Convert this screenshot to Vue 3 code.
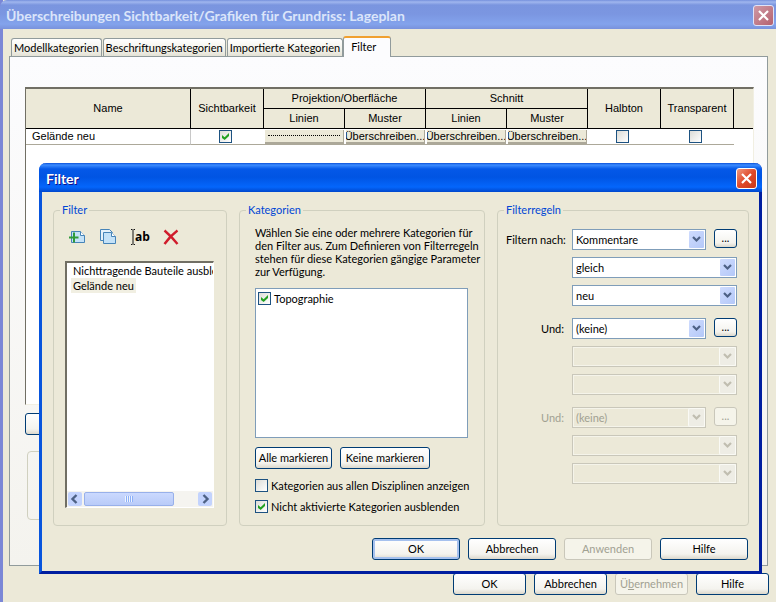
<script setup>
import { computed, reactive, ref } from 'vue'

// Registerkarten
const tabs = ['Modellkategorien', 'Beschriftungskategorien', 'Importierte Kategorien', 'Filter']
const activeTab = ref('Filter')

// Zeilen der Sichtbarkeitstabelle
const rows = reactive([
	{ id: 1, name: 'Gelände neu', visible: true, halftone: false, transparent: false }
])

// Filterliste im Dialog
const filters = ['Nichttragende Bauteile ausblenden', 'Gelände neu']
const selected = ref('Gelände neu')

// Kategorien
const categories = reactive([{ name: 'Topographie', checked: true }])
const allDisciplines = ref(false)
const hideUnchecked = ref(true)

const markAll = (value) => {
	categories.forEach((item) => {
		item.checked = value
	})
}

// Filterregeln
const rules = reactive([
	{ id: 'r1', label: 'Filtern nach:', param: 'Kommentare', operator: 'gleich', value: 'neu' },
	{ id: 'r2', label: 'Und:', param: '(keine)', operator: '', value: '' },
	{ id: 'r3', label: 'Und:', param: '(keine)', operator: '', value: '' }
])

const params = ['(keine)', 'Kommentare']
const operators = ['', 'gleich', 'ungleich']
const values = ['', 'neu']

// eine Regel ist erst aktiv, wenn die vorige einen Parameter hat
const ruleStates = computed(() =>
	rules.map((rule, i) => ({
		rule,
		off: i > 0 && rules[i - 1].param === '(keine)',
		empty: rule.param === '(keine)'
	}))
)
</script>

<template>
	<div class="window">
		<header class="titlebar">
			<h1>Überschreibungen Sichtbarkeit/Grafiken für Grundriss: Lageplan</h1>
			<button class="close" aria-label="Fenster schließen">
				<svg viewBox="0 0 19 19"><path d="M5 5l9 9M14 5l-9 9" /></svg>
			</button>
		</header>

		<main class="content">
			<nav class="tabs">
				<button
					v-for="tab in tabs"
					:key="tab"
					class="tab"
					:class="{ active: tab === activeTab }"
					@click="activeTab = tab">
					{{ tab }}
				</button>
			</nav>

			<section class="panel">
				<div class="grid-box">
					<table>
						<colgroup>
							<col class="c-name" />
							<col class="c-check" />
							<col class="c-over" span="4" />
							<col class="c-check" span="2" />
							<col />
						</colgroup>
						<thead>
							<tr>
								<th rowspan="2">Name</th>
								<th rowspan="2">Sichtbarkeit</th>
								<th colspan="2">Projektion/Oberfläche</th>
								<th colspan="2">Schnitt</th>
								<th rowspan="2">Halbton</th>
								<th rowspan="2">Transparent</th>
								<th rowspan="2" class="rest"></th>
							</tr>
							<tr>
								<th>Linien</th>
								<th>Muster</th>
								<th>Linien</th>
								<th>Muster</th>
							</tr>
						</thead>
						<tbody>
							<tr v-for="row in rows" :key="row.id">
								<td class="name">{{ row.name }}</td>
								<td class="tick"><input v-model="row.visible" type="checkbox" aria-label="Sichtbarkeit" /></td>
								<td>
									<button class="override" aria-label="Linien überschreiben"><i class="line"></i></button>
								</td>
								<td v-for="n in 3" :key="n">
									<button class="override"><span>Überschreiben...</span></button>
								</td>
								<td class="tick"><input v-model="row.halftone" type="checkbox" aria-label="Halbton" /></td>
								<td class="tick"><input v-model="row.transparent" type="checkbox" aria-label="Transparent" /></td>
								<td class="rest"></td>
							</tr>
						</tbody>
					</table>
				</div>
				<button class="btn" aria-label="Hinzufügen"></button>
				<div class="hint-box"></div>
			</section>

			<footer class="actions">
				<button class="btn">OK</button>
				<button class="btn">Abbrechen</button>
				<button class="btn" disabled>Ü<u>b</u>ernehmen</button>
				<button class="btn">Hilfe</button>
			</footer>
		</main>

		<!-- Filter-Dialog -->
		<div class="dialog" role="dialog" aria-labelledby="dialog-title">
			<header class="titlebar">
				<h2 id="dialog-title">Filter</h2>
				<button class="close" aria-label="Dialog schließen">
					<svg viewBox="0 0 19 19"><path d="M5 5l9 9M14 5l-9 9" /></svg>
				</button>
			</header>

			<div class="groups">
				<fieldset class="filters">
					<legend>Filter</legend>
					<div class="tools">
						<button aria-label="Neu">
							<svg viewBox="0 0 18 18">
								<path d="M2.500 3.500h9l4 4v7h-13z" fill="#c4e2f8" stroke="#4684b8" />
								<path d="M11.500 3.500v4h4" fill="#fff" stroke="#4684b8" />
								<path d="M5 4.500v10M0 9.500h9.500" stroke="#2f9a3a" stroke-width="2" fill="none" />
							</svg>
						</button>
						<button aria-label="Duplizieren">
							<svg viewBox="0 0 18 18">
								<path d="M0.500 1.500h9l3 3v8h-12z" fill="#e6f2fb" stroke="#4684b8" />
								<path d="M3.500 4.500h8l4 4v7h-12z" fill="#c4e2f8" stroke="#4684b8" />
								<path d="M11.500 4.500v4h4" fill="#fff" stroke="#4684b8" />
							</svg>
						</button>
						<button class="rename" aria-label="Umbenennen">
							<svg viewBox="0 0 4 18"><path d="M0 1.500h1.500M2.500 1.500h1.500M2 2v14M0 16.500h1.500M2.500 16.500h1.500" stroke="#111" fill="none" /></svg>
							<b>ab</b>
						</button>
						<button aria-label="Löschen">
							<svg viewBox="0 0 18 18">
								<path d="M2.500 2.500Q9 8 15.500 16M15.500 2.500Q8 8 2.500 16" stroke="#d01c2c" stroke-width="2.400" fill="none" />
							</svg>
						</button>
					</div>
					<div class="list">
						<ul>
							<li v-for="item in filters" :key="item" @click="selected = item">
								<span :class="{ selected: item === selected }">{{ item }}</span>
							</li>
						</ul>
						<div class="scrollbar">
							<button aria-label="Nach links"><svg viewBox="0 0 14 14"><path d="M8.500 3L4.500 7l4 4" /></svg></button>
							<div class="track"><div class="thumb"><i></i></div></div>
							<button aria-label="Nach rechts"><svg viewBox="0 0 14 14"><path d="M5.500 3l4 4-4 4" /></svg></button>
						</div>
					</div>
				</fieldset>

				<fieldset class="categories">
					<legend>Kategorien</legend>
					<p>
						Wählen Sie eine oder mehrere Kategorien für<br />
						den Filter aus. Zum Definieren von Filterregeln<br />
						stehen für diese Kategorien gängige Parameter<br />
						zur Verfügung.
					</p>
					<div class="check-list">
						<label v-for="item in categories" :key="item.name" class="check">
							<input v-model="item.checked" type="checkbox" />{{ item.name }}
						</label>
					</div>
					<div class="mark">
						<button class="btn" @click="markAll(true)">Alle markieren</button>
						<button class="btn wide" @click="markAll(false)">Keine markieren</button>
					</div>
					<label class="check">
						<input v-model="allDisciplines" type="checkbox" />Kategorien aus allen Disziplinen anzeigen
					</label>
					<label class="check">
						<input v-model="hideUnchecked" type="checkbox" />Nicht aktivierte Kategorien ausblenden
					</label>
				</fieldset>

				<fieldset class="rules">
					<legend>Filterregeln</legend>
					<div v-for="{ rule, off, empty } in ruleStates" :key="rule.id" class="rule">
						<label :for="rule.id" :class="{ off }">{{ rule.label }}</label>
						<div class="select">
							<select :id="rule.id" v-model="rule.param" :disabled="off">
								<option v-for="p in params" :key="p">{{ p }}</option>
							</select>
							<span class="arrow"><svg viewBox="0 0 9 7"><path d="M1 1l3.500 3.500L8 1" /></svg></span>
						</div>
						<button class="btn more" :disabled="off" aria-label="Parameter wählen">...</button>
						<div class="select full">
							<select v-model="rule.operator" :disabled="empty" aria-label="Operator">
								<option v-for="o in operators" :key="o">{{ o }}</option>
							</select>
							<span class="arrow"><svg viewBox="0 0 9 7"><path d="M1 1l3.500 3.500L8 1" /></svg></span>
						</div>
						<div class="select full">
							<select v-model="rule.value" :disabled="empty" aria-label="Wert">
								<option v-for="v in values" :key="v">{{ v }}</option>
							</select>
							<span class="arrow"><svg viewBox="0 0 9 7"><path d="M1 1l3.500 3.500L8 1" /></svg></span>
						</div>
					</div>
				</fieldset>
			</div>

			<footer class="actions">
				<button class="btn default">OK</button>
				<button class="btn">Abbrechen</button>
				<button class="btn" disabled>Anwenden</button>
				<button class="btn">Hilfe</button>
			</footer>
		</div>
	</div>
</template>

<style>
	body {
		margin: 0;
		background: #ece9d8;
	}
</style>

<style scoped>
	* {
		box-sizing: border-box;
	}
	.window {
		position: relative;
		min-height: 100vh;
		display: flex;
		flex-direction: column;
		border-left: 3px solid #7b87d6;
		background: #ece9d8;
		color: #000;
		font: 11px/13px Lato, 'Liberation Sans', sans-serif;
	}
	button,
	select,
	input {
		margin: 0;
		padding: 0;
		font: inherit;
		color: inherit;
	}

	/* Titelleisten */
	.titlebar {
		display: flex;
		align-items: center;
		justify-content: space-between;
		height: 29px;
		padding: 2px 2px 0 3px;
		background: linear-gradient(#7590dc 0, #a0b6ee 2px, #7a95df 5px, #7b96e1 14px, #83a3ec 24px, #7992dc 29px);
	}
	.window > .titlebar {
		margin-left: -3px;
		padding-left: 6px;
		border-radius: 7px 0 0 0;
	}
	.titlebar h1,
	.titlebar h2 {
		margin: 0;
		font: bold 14px/16px Lato, 'Open Sans', sans-serif;
		color: #dbe5fa;
		white-space: nowrap;
	}
	.close {
		width: 21px;
		height: 21px;
		border: 1px solid #dfe3f8;
		border-radius: 3px;
		background: linear-gradient(135deg, #cf9aa6, #b5616e);
	}
	.close svg {
		display: block;
		width: 19px;
		height: 19px;
		fill: none;
		stroke: #fff;
		stroke-width: 2.200;
	}

	/* Registerkarten */
	.content {
		flex: 1;
		display: flex;
		flex-direction: column;
		padding: 7px 7px 6px 6px;
	}
	.tabs {
		display: flex;
		align-items: flex-end;
		gap: 1px;
		padding-left: 2px;
		height: 20px;
	}
	.tab {
		height: 18px;
		padding: 0 2px 1px;
		border: 1px solid #919b9c;
		border-bottom: none;
		border-radius: 3px 3px 0 0;
		background: linear-gradient(#fff, #f3f2ea 60%, #e4e2d6);
		white-space: nowrap;
	}
	.tab.active {
		z-index: 1;
		height: 21px;
		margin: 0 0 -1px -1px;
		padding: 0 14px 3px 7px;
		border-top: 2px solid #f0a030;
		background: #fcfcfe;
	}
	.panel {
		height: 510px;
		margin-right: 1px;
		padding: 30px 13px 0 15px;
		border: 1px solid #919b9c;
		background: linear-gradient(#fcfcfe, #f4f3ee);
	}

	/* Tabelle */
	.grid-box {
		height: 318px;
		border: 1px solid #f1efe2;
		border-top: 2px solid #716f64;
		border-left: 1px solid #716f64;
		background: #fff;
		font-family: 'Liberation Sans', Arial, sans-serif;
	}
	table {
		width: 100%;
		table-layout: fixed;
		border-spacing: 0;
		text-align: center;
	}
	.c-name {
		width: 165px;
	}
	.c-check {
		width: 73px;
	}
	.c-over {
		width: 81px;
	}
	th {
		height: 20px;
		padding: 0;
		border-right: 1px solid #000;
		border-bottom: 1px solid #000;
		background: #ece9d8;
		font-weight: normal;
	}
	th.rest {
		border-right: none;
	}
	td {
		height: 16px;
		padding: 0;
		border-bottom: 1px solid #aca899;
		line-height: 0;
	}
	td.name {
		padding-left: 6px;
		border-right: 1px solid #c8c8c8;
		text-align: left;
		line-height: 13px;
	}
	td.tick {
		padding-right: 4px;
	}
	td.rest {
		border-bottom: none;
	}
	.override {
		display: flex;
		justify-content: center;
		align-items: center;
		width: 79px;
		height: 14px;
		margin: 0 1px;
		border: solid #aca899;
		border-width: 0 1px 2px 0;
		background: #ece9d8;
		line-height: 12px;
		overflow: hidden;
	}
	.override span {
		flex: none;
	}
	.override .line {
		width: 72px;
		border-top: 1px dotted #000;
	}
	.panel > .btn {
		display: block;
		width: 88px;
		margin-top: 8px;
	}
	.hint-box {
		height: 69px;
		margin: 16px 0 0 2px;
		border: 1px solid #d0d0bf;
		border-radius: 4px;
	}

	/* Kontrollkästchen */
	input[type='checkbox'] {
		appearance: none;
		flex: none;
		display: inline-grid;
		place-items: center;
		width: 13px;
		height: 13px;
		border: 1px solid #1d5281;
		background: linear-gradient(135deg, #dcdcd7, #fff);
	}
	input[type='checkbox']:checked::before {
		content: '';
		width: 7px;
		height: 7px;
		background: #21a121;
		clip-path: polygon(0 28%, 38% 60%, 100% 0, 100% 42%, 38% 100%, 0 70%);
	}
	.check {
		display: flex;
		align-items: center;
		gap: 3px;
		white-space: nowrap;
	}

	/* Schaltflächen */
	.btn {
		height: 22px;
		padding-bottom: 1px;
		border: 1px solid #003c74;
		border-radius: 3px;
		background: linear-gradient(#fff, #f4f3ee 75%, #dcd8cc);
		white-space: nowrap;
	}
	.btn.default {
		box-shadow: inset 0 0 0 2px #a6c1ee;
	}
	.btn:disabled {
		border-color: #c9c7ba;
		background: #f5f4ea;
		color: #a1a192;
	}
	.actions {
		display: flex;
		justify-content: flex-end;
		gap: 8px;
	}
	.content > .actions {
		margin-top: 7px;
	}
	.content > .actions .btn {
		width: 73px;
	}

	/* Dialog */
	.dialog {
		position: absolute;
		top: 163px;
		left: 36px;
		right: 14px;
		border: solid #0831d9;
		border-width: 0 3px 3px;
		border-color: #0831d9 #001ea0 #001ea0 #0855dd;
		border-radius: 7px 7px 0 0;
		background: #ece9d8;
	}
	.dialog .titlebar {
		margin: 0 -3px;
		padding-left: 7px;
		padding-right: 5px;
		border-radius: 7px 7px 0 0;
		background: linear-gradient(#0a50d8 0, #3c8cff 2px, #0458e8 6px, #0054e3 14px, #0466fc 24px, #0047cc 29px);
	}
	.dialog h2 {
		color: #fff;
		text-shadow: 1px 1px #0f1089;
	}
	.dialog .close {
		border-color: #fff;
		background: linear-gradient(135deg, #f09a80, #e0492a 50%, #c8381a);
	}
	.dialog .actions {
		padding: 12px 11px 11px;
	}
	.dialog .actions .btn {
		width: 88px;
	}
	.groups {
		display: grid;
		grid-template-columns: 174px 246px 1fr;
		gap: 12px;
		padding: 11px 10px 0 11px;
	}
	fieldset {
		min-width: 0;
		height: 323px;
		margin: 0;
		padding: 0 0 0 var(--pad);
		border: 1px solid #d0d0bf;
		border-radius: 4px;
	}
	legend {
		margin-left: calc(6px - var(--pad));
		padding: 0 2px;
		line-height: 14px;
		color: #0046d5;
	}

	/* Filterliste */
	.filters {
		--pad: 11px;
		padding-top: 11px;
		padding-right: 12px;
	}
	.tools {
		display: flex;
		gap: 13px;
		padding-left: 4px;
	}
	.tools button {
		width: 18px;
		height: 18px;
		border: none;
		background: none;
	}
	.tools svg {
		display: block;
		width: 18px;
		height: 18px;
	}
	.tools .rename {
		display: flex;
		align-items: center;
	}
	.tools .rename svg {
		flex: none;
		width: 4px;
	}
	.rename b {
		font: bold 12px/16px 'Open Sans', sans-serif;
	}
	.list {
		display: flex;
		flex-direction: column;
		justify-content: space-between;
		height: 247px;
		margin-top: 15px;
		border: 1px solid #fff;
		border-top: 2px solid #716f64;
		border-left: 2px solid #716f64;
		background: #fff;
	}
	ul {
		margin: 0;
		padding: 0 0 0 4px;
		list-style: none;
		overflow: hidden;
	}
	li {
		line-height: 15px;
		white-space: nowrap;
	}
	li span {
		display: inline-block;
		padding: 0 2px;
	}
	li .selected {
		background: #f1efe2;
	}
	.scrollbar {
		display: flex;
		gap: 2px;
		height: 16px;
		padding: 1px;
		background: #f5f4f0;
	}
	.scrollbar button {
		flex: none;
		width: 14px;
		height: 14px;
		border: none;
		border-radius: 2px;
		background: #c3d3fd;
	}
	.scrollbar svg {
		display: block;
		fill: none;
		stroke: #4d6185;
		stroke-width: 2.400;
	}
	.track {
		flex: 1;
	}
	.thumb {
		display: grid;
		place-items: center;
		width: 80%;
		height: 14px;
		border: 1px solid #98b0ea;
		border-radius: 2px;
		background: linear-gradient(#cbd9fe, #b9cbf8);
	}
	.thumb i {
		width: 8px;
		height: 6px;
		background: repeating-linear-gradient(90deg, #eef4fe 0 1px, #8cb0f8 1px 2px);
	}

	/* Kategorien */
	.categories {
		--pad: 15px;
		padding-top: 9px;
		padding-right: 16px;
	}
	.categories p {
		margin: 0;
		white-space: nowrap;
	}
	.check-list {
		height: 150px;
		margin-top: 10px;
		padding: 3px 2px;
		border: 1px solid #7f9db9;
		background: #fff;
	}
	.mark {
		display: flex;
		gap: 8px;
		margin: 9px 0 10px;
	}
	.mark .btn {
		width: 77px;
	}
	.mark .btn.wide {
		width: 90px;
	}
	.categories > .check {
		margin-bottom: 8px;
	}

	/* Filterregeln */
	.rules {
		--pad: 8px;
		padding-top: 12px;
		padding-right: 11px;
	}
	.rule {
		display: grid;
		grid-template-columns: 58px 1fr 23px;
		align-items: center;
		gap: 7px 8px;
		margin-bottom: 12px;
	}
	.rule > label {
		text-align: right;
		white-space: nowrap;
	}
	.rule > label.off {
		color: #a1a192;
	}
	.select {
		display: grid;
		align-items: center;
	}
	.select.full {
		grid-column: 2 / 4;
	}
	.select select,
	.select .arrow {
		grid-area: 1 / 1;
	}
	.select select {
		appearance: none;
		width: 100%;
		height: 21px;
		padding: 0 18px 0 3px;
		border: 1px solid #7f9db9;
		border-radius: 0;
		background: #fff;
	}
	.arrow {
		display: grid;
		place-items: center;
		justify-self: end;
		width: 15px;
		height: 17px;
		margin-right: 2px;
		border-radius: 1px;
		background: linear-gradient(135deg, #cfdcfe, #b4c8f8);
		pointer-events: none;
	}
	.arrow svg {
		width: 9px;
		height: 7px;
		fill: none;
		stroke: #4d6185;
		stroke-width: 2.200;
	}
	.select select:disabled {
		border-color: #c9c7ba;
		background: #ece9d8;
		color: #a1a192;
		opacity: 1;
		box-shadow: inset 0 0 0 1px #f5f4ea;
	}
	select:disabled + .arrow {
		background: #eeede5;
		box-shadow: 0 0 0 1px #fafaf5;
	}
	select:disabled + .arrow svg {
		stroke: #c0beb0;
	}
	.more {
		align-self: start;
		height: 19px;
		line-height: 12px;
	}
</style>
